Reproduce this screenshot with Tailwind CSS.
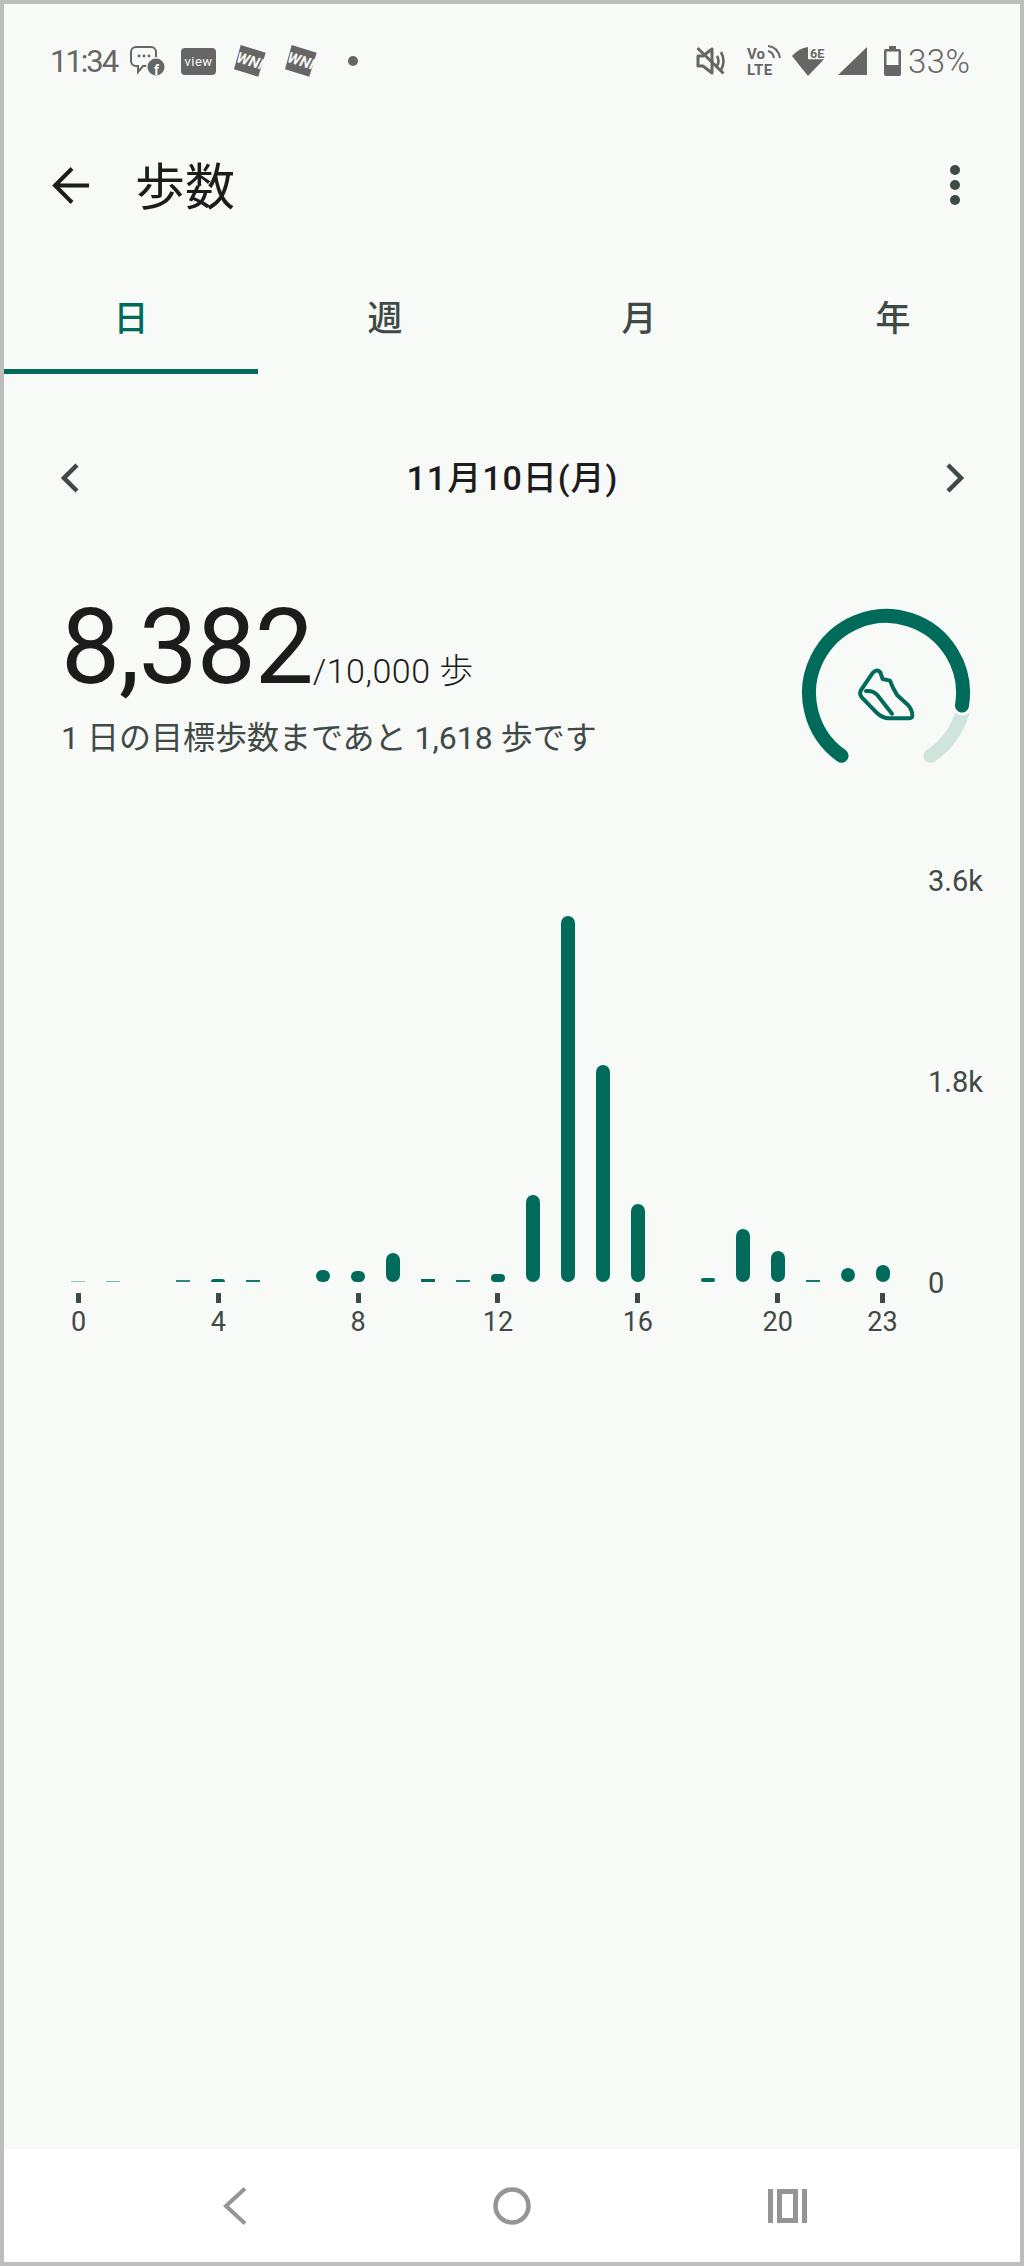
<!DOCTYPE html>
<html lang="ja">
<head>
<title>歩数</title>
<meta charset="UTF-8" />
<script src="https://cdn.jsdelivr.net/npm/@tailwindcss/browser@4"></script>
</head>
<body class="bg-[#f8faf7]">
<div class="w-[1024px] h-[2266px] border-4 border-[#bdbdbd] bg-[#f8faf7] flex flex-col overflow-hidden [font-family:Roboto,'Noto_Sans_CJK_JP',sans-serif]">

  <!-- status bar -->
  <div class="h-[114px] shrink-0 flex items-center justify-between pl-[46px] pr-[49px] text-[#666666]">
    <div class="flex items-center">
      <span class="text-[31px] leading-none font-normal w-[80px] tracking-[-2px]">11:34</span>
      <svg class="w-[36px] h-[32px] overflow-visible" viewBox="0 0 36 32">
        <path d="M6 2h15a5 5 0 0 1 5 5v9a5 5 0 0 1-5 5H13l-5 6v-6H6a5 5 0 0 1-5-5V7a5 5 0 0 1 5-5z" fill="none" stroke="#666" stroke-width="2"/>
        <circle cx="9" cy="11" r="1.4" fill="#666"/><circle cx="14" cy="11" r="1.4" fill="#666"/><circle cx="19" cy="11" r="1.4" fill="#666"/>
        <circle cx="26" cy="22" r="10" fill="#f8faf7"/><circle cx="26" cy="22" r="8.5" fill="#666"/>
        <text x="26.500" y="30" text-anchor="middle" font-size="14" font-weight="700" fill="#f8faf7">f</text>
      </svg>
      <div class="ml-[15px] w-[35px] h-[27px] rounded-[4px] bg-[#666666] text-[#f8faf7] text-[13px] leading-[27px] font-normal tracking-[0.5px] text-center">view</div>
      <svg class="ml-[18px] w-[32px] h-[32px] overflow-visible" viewBox="0 0 32 32">
        <polygon points="6.7,0 31.7,7.7 24.3,31.7 0,24.3" fill="#666"/>
        <text x="16" y="21" text-anchor="middle" font-size="15" font-weight="700" font-style="italic" fill="#f8faf7" transform="rotate(17 16 16)">WNI</text>
      </svg>
      <svg class="ml-[19px] w-[32px] h-[32px] overflow-visible" viewBox="0 0 32 32">
        <polygon points="6.7,0 31.7,7.7 24.3,31.7 0,24.3" fill="#666"/>
        <text x="16" y="21" text-anchor="middle" font-size="15" font-weight="700" font-style="italic" fill="#f8faf7" transform="rotate(17 16 16)">WNI</text>
      </svg>
      <div class="ml-[31px] w-[10px] h-[10px] rounded-full bg-[#666666]"></div>
    </div>
    <div class="flex items-center">
      <svg class="w-[30px] h-[30px]" viewBox="0 0 30 30" fill="none" stroke="#666">
        <path d="M7 10H2v10h5l9 7V3z" stroke-width="3" stroke-linejoin="round"/>
        <path d="M21 10q3 5 0 10M25 6q5 9 0 18" stroke-width="2.6"/>
        <path d="M1.5 2l26 25.5" stroke-width="3"/>
      </svg>
      <svg class="ml-[21px] w-[35px] h-[32px] overflow-visible" viewBox="0 0 35 32">
        <text x="0" y="14" font-size="15" font-weight="700" fill="#666">Vo</text>
        <path d="M21 6q5 1 6 7M21 1q10 1 12 12" fill="none" stroke="#666" stroke-width="2"/>
        <text x="0" y="30" font-size="15" font-weight="700" fill="#666" letter-spacing="0.5">LTE</text>
      </svg>
      <svg class="ml-[8px] w-[38px] h-[32px] overflow-visible" viewBox="0 0 38 32">
        <path d="M2 11Q9 3 18 2V14.300H34L18 31Z" fill="#666"/>
        <text x="20" y="12.500" font-size="12.500" font-weight="700" fill="#666">6E</text>
      </svg>
      <svg class="ml-[10px] w-[30px] h-[30px]" viewBox="0 0 30 30">
        <polygon points="0,29 29,1 29,29" fill="#666"/>
      </svg>
      <svg class="ml-[15px] w-[19px] h-[32px]" viewBox="0 0 19 32">
        <path d="M6 1h7v3h3a2 2 0 0 1 2 2v23a2 2 0 0 1-2 2H3a2 2 0 0 1-2-2V6a2 2 0 0 1 2-2h3z" fill="#666"/>
        <rect x="3.500" y="6.500" width="12" height="13.500" fill="#f8faf7"/>
      </svg>
      <span class="ml-[6px] w-[63px] text-[33px] leading-none font-light tracking-[0.5px]">33%</span>
    </div>
  </div>

  <!-- toolbar -->
  <div class="h-[146px] shrink-0 flex items-center pl-[48px] pr-[60px] pb-[12px]">
    <svg class="w-[37px] h-[37px]" viewBox="0 0 37 37" fill="none" stroke="#1c1c1c" stroke-width="4">
      <path d="M20 1.500 3 18.500l17 17M3 18.500h35"/>
    </svg>
    <h1 class="ml-[46px] mt-[5px] text-[50px] leading-none font-normal text-[#1c1c1c]">歩数</h1>
    <div class="ml-auto flex flex-col gap-[5px]">
      <div class="w-[10px] h-[10px] rounded-full bg-[#3f4946]"></div>
      <div class="w-[10px] h-[10px] rounded-full bg-[#3f4946]"></div>
      <div class="w-[10px] h-[10px] rounded-full bg-[#3f4946]"></div>
    </div>
  </div>

  <!-- tabs -->
  <div class="h-[110px] shrink-0 grid grid-cols-4 w-[1016px] text-[35px] font-medium text-[#3f4946] text-center">
    <div class="border-b-[5px] border-[#006b5a] text-[#006b5a] flex items-center justify-center pt-[7px]">日</div>
    <div class="flex items-center justify-center pt-[2px]">週</div>
    <div class="flex items-center justify-center pt-[2px]">月</div>
    <div class="flex items-center justify-center pt-[2px]">年</div>
  </div>

  <!-- date -->
  <div class="h-[208px] shrink-0 flex items-center justify-between pl-[57px] pr-[56px]">
    <svg class="w-[18px] h-[30px]" viewBox="0 0 18 30" fill="none" stroke="#3f4946" stroke-width="4.500"><path d="M16 2 3 15l13 13"/></svg>
    <div class="text-[34px] font-medium text-[#1c1c1c] leading-none tracking-[1px]">11月10日(月)</div>
    <svg class="w-[18px] h-[30px]" viewBox="0 0 18 30" fill="none" stroke="#3f4946" stroke-width="4.500"><path d="M2 2l13 13L2 28"/></svg>
  </div>

  <!-- summary -->
  <div class="h-[285px] shrink-0 flex justify-between items-start pl-[57px] pr-[43px] pt-[13px]">
    <div>
      <div class="flex items-baseline text-[#1c1c1c]">
        <span class="text-[105px] leading-[105px] tracking-[-1px]">8,382</span>
        <span class="text-[34px] leading-none font-light tracking-[0.5px]">/10,000 歩</span>
      </div>
      <p class="mt-[18px] text-[32px] leading-[40px] font-normal text-[#3f4946]">1 日の目標歩数まであと 1,618 歩です</p>
    </div>
    <svg class="w-[182px] h-[170px] mt-[6px]" viewBox="0 0 182 170" fill="none">
      <path d="M169 104.500A77 77 0 0 1 135.500 154.800" stroke="#d0e4de" stroke-width="14" stroke-linecap="round"/>
      <path d="M46.500 154.800A77 77 0 1 1 167 104.500" stroke="#f8faf7" stroke-width="20" stroke-linecap="round"/>
      <path d="M46.500 154.800A77 77 0 1 1 167 104.500" stroke="#006b5a" stroke-width="14" stroke-linecap="round"/>
      <g transform="translate(-35 -20) scale(.3333)" stroke="#006b5a" stroke-width="12" stroke-linejoin="round" stroke-linecap="round">
        <path d="M338 276Q350 262 361 274L368 294 390 299Q398 322 412 343L444 372Q456 385 457 402 458 412 448 412H388Q368 412 352 397L306 350Q296 338 304 326Z"/>
        <path d="M318 330Q340 328 352 342L396 398"/>
      </g>
    </svg>
  </div>

  <!-- chart -->
  <div class="flex items-start pl-[57px]">
    <div class="w-[839px] shrink-0">
      <div class="h-[415px] grid grid-cols-24 items-end justify-items-center">
        <div class="w-[14px] h-px bg-[#006b5a]/40"></div>
        <div class="w-[14px] h-px bg-[#006b5a]/50"></div>
        <div></div>
        <div class="w-[14px] h-[2px] bg-[#006b5a]/80"></div>
        <div class="w-[14px] h-[3px] rounded-t-full bg-[#006b5a]"></div>
        <div class="w-[14px] h-[2px] bg-[#006b5a]/90"></div>
        <div></div>
        <div class="w-[14px] h-[12px] rounded-full bg-[#006b5a]"></div>
        <div class="w-[14px] h-[11px] rounded-full bg-[#006b5a]"></div>
        <div class="w-[14px] h-[29px] rounded-full bg-[#006b5a]"></div>
        <div class="w-[14px] h-[3px] bg-[#006b5a]"></div>
        <div class="w-[14px] h-[2px] bg-[#006b5a]/90"></div>
        <div class="w-[14px] h-[8px] rounded-full bg-[#006b5a]"></div>
        <div class="w-[14px] h-[87px] rounded-full bg-[#006b5a]"></div>
        <div class="w-[14px] h-[366px] rounded-full bg-[#006b5a]"></div>
        <div class="w-[14px] h-[217px] rounded-full bg-[#006b5a]"></div>
        <div class="w-[14px] h-[78px] rounded-full bg-[#006b5a]"></div>
        <div></div>
        <div class="w-[14px] h-[4px] rounded-full bg-[#006b5a]"></div>
        <div class="w-[14px] h-[53px] rounded-full bg-[#006b5a]"></div>
        <div class="w-[14px] h-[31px] rounded-full bg-[#006b5a]"></div>
        <div class="w-[14px] h-[2px] bg-[#006b5a]/90"></div>
        <div class="w-[14px] h-[14px] rounded-full bg-[#006b5a]"></div>
        <div class="w-[14px] h-[17px] rounded-full bg-[#006b5a]"></div>
      </div>
      <div class="grid grid-cols-24 mt-[11px] text-[27px] leading-[28px] font-normal text-[#3f4946]">
        <div class="col-start-1 flex flex-col items-center"><div class="w-[5px] h-[10px] bg-[#3f4946]"></div><span class="mt-[5px]">0</span></div>
        <div class="col-start-5 flex flex-col items-center"><div class="w-[5px] h-[10px] bg-[#3f4946]"></div><span class="mt-[5px]">4</span></div>
        <div class="col-start-9 flex flex-col items-center"><div class="w-[5px] h-[10px] bg-[#3f4946]"></div><span class="mt-[5px]">8</span></div>
        <div class="col-start-13 flex flex-col items-center"><div class="w-[5px] h-[10px] bg-[#3f4946]"></div><span class="mt-[5px]">12</span></div>
        <div class="col-start-17 flex flex-col items-center"><div class="w-[5px] h-[10px] bg-[#3f4946]"></div><span class="mt-[5px]">16</span></div>
        <div class="col-start-21 flex flex-col items-center"><div class="w-[5px] h-[10px] bg-[#3f4946]"></div><span class="mt-[5px]">20</span></div>
        <div class="col-start-24 flex flex-col items-center"><div class="w-[5px] h-[10px] bg-[#3f4946]"></div><span class="mt-[5px]">23</span></div>
      </div>
    </div>
    <div class="ml-[28px] h-[430px] flex flex-col justify-between text-[29px] leading-[28px] font-normal text-[#3f4946]">
      <span>3.6k</span>
      <span>1.8k</span>
      <span>0</span>
    </div>
  </div>

  <div class="flex-1"></div>

  <!-- nav bar -->
  <div class="h-[113px] shrink-0 bg-white flex items-center pl-[219px]">
    <svg class="w-[24px] h-[38px]" viewBox="0 0 24 38" fill="none" stroke="#959595" stroke-width="4"><path d="M22 1.500 3 19l19 17.500"/></svg>
    <svg class="ml-[246px] w-[38px] h-[38px]" viewBox="0 0 38 38" fill="none" stroke="#959595" stroke-width="4.500"><circle cx="19" cy="19" r="16.500"/></svg>
    <svg class="ml-[237px] w-[39px] h-[34px]" viewBox="0 0 39 34" fill="#959595">
      <rect x="0" y="0" width="5" height="34"/><rect x="34" y="0" width="5" height="34"/>
      <rect x="11.500" y="2.500" width="16" height="29" fill="none" stroke="#959595" stroke-width="5"/>
    </svg>
  </div>
</div>
</body>
</html>
